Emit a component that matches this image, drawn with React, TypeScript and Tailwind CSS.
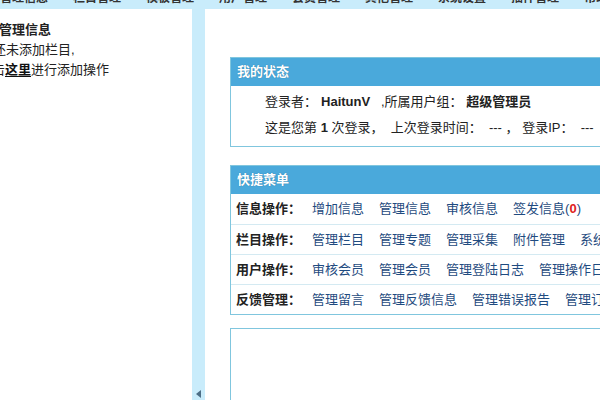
const nav = ["管理信息", "栏目管理", "模板管理", "用户管理", "会员管理", "其他管理", "系统设置", "插件管理", "帮助"];

const quick: { label: string; links: string[] }[] = [
  { label: "信息操作：", links: ["增加信息", "管理信息", "审核信息", "签发信息"] },
  { label: "栏目操作：", links: ["管理栏目", "管理专题", "管理采集", "附件管理", "系统设置"] },
  { label: "用户操作：", links: ["审核会员", "管理会员", "管理登陆日志", "管理操作日志"] },
  { label: "反馈管理：", links: ["管理留言", "管理反馈信息", "管理错误报告", "管理订阅"] },
];

function BoxHeader({ title }: { title: string }) {
  return (
    <div className="h-[28px] bg-[#4aa9db] pl-[6px] flex items-center text-[13px] font-bold text-white [text-shadow:0_0_1px_#1d6e9a]">
      {title}
    </div>
  );
}

export default function App() {
  return (
    <div
      className="w-[600px] h-[400px] overflow-hidden flex flex-col bg-[#c9ecfb] text-[#222]"
      style={{ fontFamily: '"Liberation Sans", "Noto Sans CJK SC", sans-serif' }}
    >
      {/* top menu, mostly scrolled out of view */}
      <div className="h-[9px] shrink-0 overflow-hidden flex gap-[25px] whitespace-nowrap">
        {nav.map((n) => (
          <span key={n} className="text-[12px] leading-[12px] font-bold -mt-[8px] text-[#333]">
            {n}
          </span>
        ))}
      </div>

      <div className="flex flex-1 min-h-0">
        {/* left tree */}
        <aside className="w-[192px] shrink-0 bg-white pt-[11px] text-[13px] leading-[20px] whitespace-nowrap overflow-hidden">
          <div className="font-bold -ml-[1px]">管理信息</div>
          <div className="-ml-[20px]">您还未添加栏目,</div>
          <div className="-ml-[34px]">
            请点击<a className="font-bold underline underline-offset-2 text-[#111]">这里</a>进行添加操作
          </div>
        </aside>

        {/* splitter */}
        <div className="w-[13px] shrink-0 flex flex-col justify-end items-center pb-[2px]">
          <svg width="5" height="8" viewBox="0 0 5 8">
            <path d="M5 0 L0 4 L5 8 Z" fill="#4d6e86" />
          </svg>
        </div>

        {/* main panel */}
        <main className="flex-1 bg-white pl-[25px] pt-[48px] overflow-hidden">
          <div className="w-[420px] border border-[#80c6de]">
            <BoxHeader title="我的状态" />
            <div className="pl-[34px] pt-[3px] pb-[5px] text-[13px] leading-[26px] whitespace-nowrap">
              <div>
                登录者：<b className="ml-[4px]">HaitunV</b>&nbsp;&nbsp;&nbsp;,所属用户组：&nbsp;<b>超级管理员</b>
              </div>
              <div>
                这是您第 <b>1</b> 次登录，&nbsp;&nbsp;上次登录时间：&nbsp;&nbsp;---&nbsp;，&nbsp;登录IP：&nbsp;&nbsp;---
              </div>
            </div>
          </div>

          <div className="w-[420px] mt-[18px] border border-[#80c6de]">
            <BoxHeader title="快捷菜单" />
            {quick.map((row, i) => (
              <div
                key={row.label}
                className={`h-[30px] flex items-center pl-[5px] text-[13px] whitespace-nowrap ${
                  i > 0 ? "border-t border-[#d4eaf2]" : ""
                }`}
              >
                <span className="font-bold w-[76px] shrink-0">{row.label}</span>
                {row.links.map((l, j) => (
                  <a key={l} className="text-[#1f4b80] mr-[15px] shrink-0">
                    {l}
                    {i === 0 && j === 3 && (
                      <>
                        (<b className="text-[#e02020]">0</b>)
                      </>
                    )}
                  </a>
                ))}
              </div>
            ))}
          </div>

          <div className="w-[420px] h-[200px] mt-[13px] border border-[#80c6de]" />
        </main>
      </div>
    </div>
  );
}
